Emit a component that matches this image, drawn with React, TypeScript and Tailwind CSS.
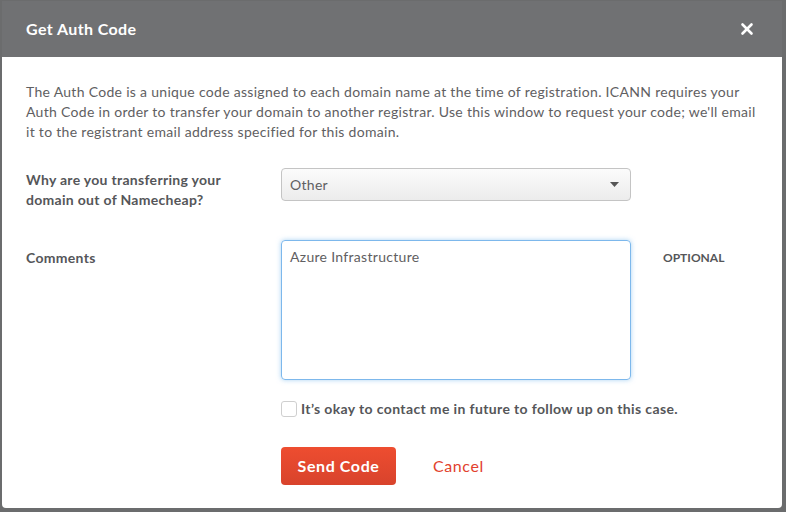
import { X } from "lucide-react";

export default function App() {
  return (
    <div
      className="h-[512px] w-[786px] overflow-hidden bg-[#6b6c6d] px-[2px] pt-[1px]"
      style={{ fontFamily: "Lato, 'Open Sans', sans-serif" }}
    >
      <div className="flex h-[507px] w-[780px] flex-col overflow-hidden rounded-b-[4px] bg-white">
        {/* HEADER */}
        <div className="flex h-[56px] shrink-0 items-center justify-between bg-[#707173] pl-[24px] pr-[26px]">
          <div className="text-[16px] font-bold tracking-[0.4px] text-white">Get Auth Code</div>
          <X size={18} strokeWidth={3.5} className="text-white" />
        </div>

        {/* BODY */}
        <div className="px-[24px] pt-[25px]">
          <p className="text-[14px] leading-[20px] tracking-[0.3px] text-[#5f6062]">
            The Auth Code is a unique code assigned to each domain name at the time of registration. ICANN requires your
            <br />
            Auth Code in order to transfer your domain to another registrar. Use this window to request your code; we'll email
            <br />
            it to the registrant email address specified for this domain.
          </p>

          <div className="mt-[26px] grid grid-cols-[255px_350px_1fr] items-start">
            <div className="mt-[2px] text-[14px] font-bold leading-[20px] tracking-[0.3px] text-[#555659]">
              Why are you transferring your
              <br />
              domain out of Namecheap?
            </div>
            <div className="flex h-[33px] items-center justify-between rounded-[4px] border border-[#c4c4c4] bg-gradient-to-b from-[#fbfbfb] to-[#ececec] pl-[8px] pr-[11px]">
              <span className="text-[14px] tracking-[0.3px] text-[#5f6062]">Other</span>
              <svg width="9" height="5" viewBox="0 0 9 5">
                <path d="M0 0h9L4.5 5z" fill="#555" />
              </svg>
            </div>
            <div />
          </div>

          <div className="mt-[30px] grid grid-cols-[255px_350px_1fr] items-start">
            <div className="mt-[8px] text-[14px] font-bold leading-[20px] tracking-[0.3px] text-[#555659]">
              Comments
            </div>
            <div className="h-[140px] rounded-[4px] border border-[#7db8ec] px-[8px] pt-[3px] shadow-[0_0_5px_rgba(102,175,233,0.55)]">
              <span className="text-[14px] leading-[20px] tracking-[0.3px] text-[#5f6062]">Azure Infrastructure</span>
            </div>
            <div className="mt-[9px] pl-[32px] text-[12px] font-bold leading-[18px] text-[#555659]">
              OPTIONAL
            </div>
          </div>

          <div className="mt-[18px] flex items-center pl-[255px]">
            <div className="h-[16px] w-[16px] rounded-[3px] border border-[#cfcfcf] bg-white" />
            <span className="ml-[4px] text-[14px] font-bold tracking-[0.37px] text-[#555659]">
              It’s okay to contact me in future to follow up on this case.
            </span>
          </div>

          <div className="mt-[28px] flex items-center pl-[255px]">
            <button className="h-[38px] w-[115px] rounded-[4px] bg-gradient-to-b from-[#ee4d30] to-[#d8432c] text-[16px] font-bold tracking-[0.6px] text-white">
              Send Code
            </button>
            <span className="ml-[37px] text-[16px] tracking-[0.6px] text-[#e2412e]">Cancel</span>
          </div>
        </div>
      </div>
    </div>
  );
}
